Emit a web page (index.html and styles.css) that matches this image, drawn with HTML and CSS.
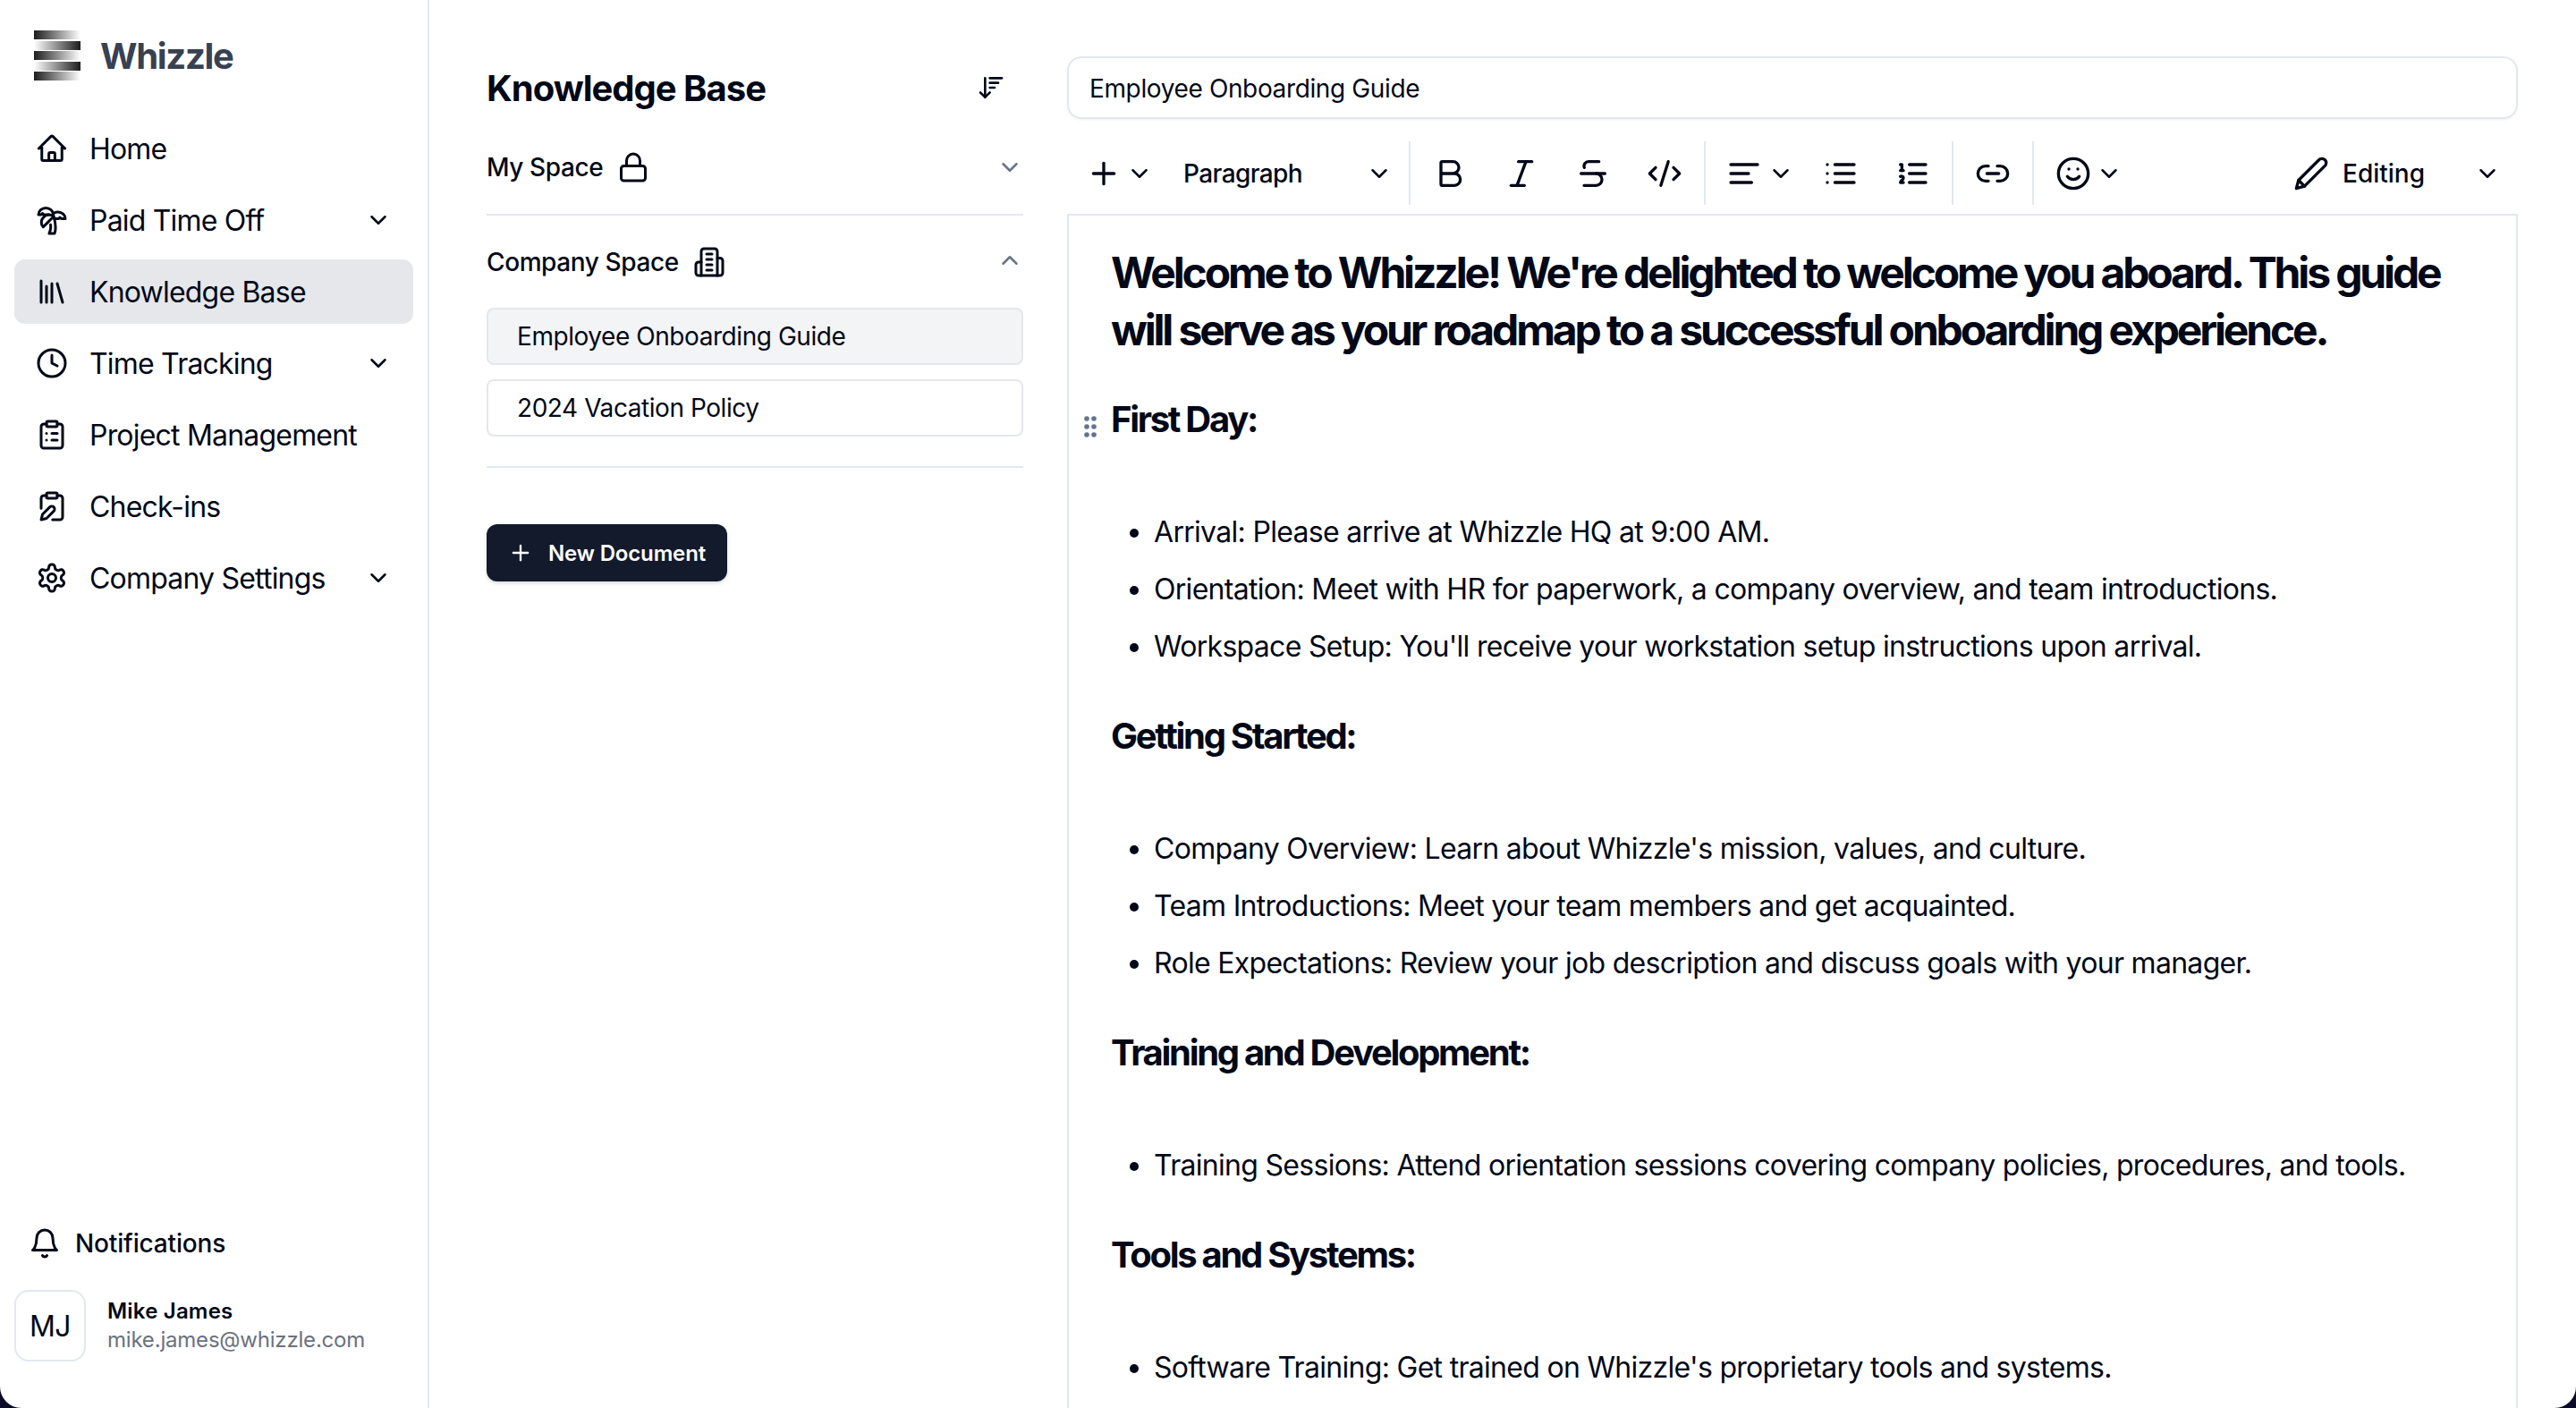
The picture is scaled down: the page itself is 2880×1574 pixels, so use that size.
FILE: index.html
```html
<!DOCTYPE html>
<html>
<head>
    <title>Whizzle - Knowledge Base</title>
    <link rel="stylesheet" href="styles.css">
</head>
<body>
<svg class="sprite">
    <symbol id="chev-down" viewBox="0 0 24 24"><path d="m6 9 6 6 6-6"/></symbol>
    <symbol id="chev-up" viewBox="0 0 24 24"><path d="m18 15-6-6-6 6"/></symbol>
</svg>

<div class="app">
    <aside class="sidebar">
        <div>
            <div class="brand">
                <div class="logo">
                    <span class="bar"></span>
                    <span class="bar flip"></span>
                    <span class="bar"></span>
                    <span class="bar flip"></span>
                    <span class="bar"></span>
                </div>
                <span class="brand-name">Whizzle</span>
            </div>
            <nav class="nav">
                <a class="nav-item">
                    <svg class="icon" viewBox="0 0 24 24" stroke-width="1.8"><path d="m2.25 12 8.954-8.955c.44-.439 1.152-.439 1.591 0L21.75 12M4.5 9.75v10.125c0 .621.504 1.125 1.125 1.125H9.75v-4.875c0-.621.504-1.125 1.125-1.125h2.25c.621 0 1.125.504 1.125 1.125V21h4.125c.621 0 1.125-.504 1.125-1.125V9.75M8.25 21h8.25"/></svg>
                    <span class="nav-label">Home</span>
                </a>
                <a class="nav-item">
                    <svg class="icon" viewBox="0 0 24 24"><path d="M13 8c0-2.76-2.46-5-5.5-5S2 5.24 2 8h2l1-1 1 1h4"/><path d="M13 7.14A5.82 5.82 0 0 1 16.5 6c3.04 0 5.5 2.24 5.5 5h-3l-1-1-1 1h-3"/><path d="M5.89 9.71c-2.15 2.15-2.3 5.47-.35 7.43l4.24-4.25.7-.7.71-.71 2.12-2.12c-1.95-1.96-5.27-1.8-7.42.35"/><path d="M11 15.5c.5 2.5-.17 4.5-1 6.5h4c2-5.5-.5-12-1-14"/></svg>
                    <span class="nav-label">Paid Time Off</span>
                    <svg class="chev"><use href="#chev-down"/></svg>
                </a>
                <a class="nav-item active">
                    <svg class="icon" viewBox="0 0 24 24"><path d="m16 6 4 14"/><path d="M12 6v14"/><path d="M8 8v12"/><path d="M4 4v16"/></svg>
                    <span class="nav-label">Knowledge Base</span>
                </a>
                <a class="nav-item">
                    <svg class="icon" viewBox="0 0 24 24"><circle cx="12" cy="12" r="10"/><path d="M12 6v6l4 2"/></svg>
                    <span class="nav-label">Time Tracking</span>
                    <svg class="chev"><use href="#chev-down"/></svg>
                </a>
                <a class="nav-item">
                    <svg class="icon" viewBox="0 0 24 24"><rect x="8" y="2" width="8" height="4" rx="1"/><path d="M16 4h2a2 2 0 0 1 2 2v14a2 2 0 0 1-2 2H6a2 2 0 0 1-2-2V6a2 2 0 0 1 2-2h2"/><path d="M12 11h4"/><path d="M12 16h4"/><path d="M8 11h.01"/><path d="M8 16h.01"/></svg>
                    <span class="nav-label">Project Management</span>
                </a>
                <a class="nav-item">
                    <svg class="icon" viewBox="0 0 24 24"><rect x="8" y="2" width="8" height="4" rx="1"/><path d="M10.4 12.6a2 2 0 0 1 3 3L8 21l-4 1 1-4Z"/><path d="M16 4h2a2 2 0 0 1 2 2v14a2 2 0 0 1-2 2h-5.5"/><path d="M4 13.5V6a2 2 0 0 1 2-2h2"/></svg>
                    <span class="nav-label">Check-ins</span>
                </a>
                <a class="nav-item">
                    <svg class="icon" viewBox="0 0 24 24"><path d="M12.22 2h-.44a2 2 0 0 0-2 2v.18a2 2 0 0 1-1 1.73l-.43.25a2 2 0 0 1-2 0l-.15-.08a2 2 0 0 0-2.73.73l-.22.38a2 2 0 0 0 .73 2.73l.15.1a2 2 0 0 1 1 1.72v.51a2 2 0 0 1-1 1.74l-.15.09a2 2 0 0 0-.73 2.73l.22.38a2 2 0 0 0 2.73.73l.15-.08a2 2 0 0 1 2 0l.43.25a2 2 0 0 1 1 1.73V20a2 2 0 0 0 2 2h.44a2 2 0 0 0 2-2v-.18a2 2 0 0 1 1-1.73l.43-.25a2 2 0 0 1 2 0l.15.08a2 2 0 0 0 2.73-.73l.22-.39a2 2 0 0 0-.73-2.73l-.15-.08a2 2 0 0 1-1-1.74v-.5a2 2 0 0 1 1-1.74l.15-.09a2 2 0 0 0 .73-2.73l-.22-.38a2 2 0 0 0-2.73-.73l-.15.08a2 2 0 0 1-2 0l-.43-.25a2 2 0 0 1-1-1.73V4a2 2 0 0 0-2-2z"/><circle cx="12" cy="12" r="3"/></svg>
                    <span class="nav-label">Company Settings</span>
                    <svg class="chev"><use href="#chev-down"/></svg>
                </a>
            </nav>
        </div>
        <div class="side-bottom">
            <div class="notif">
                <svg class="icon" viewBox="0 0 24 24"><path d="M6 8a6 6 0 0 1 12 0c0 7 3 9 3 9H3s3-2 3-9"/><path d="M10.3 21a1.94 1.94 0 0 0 3.4 0"/></svg>
                <span>Notifications</span>
            </div>
            <div class="user">
                <div class="avatar">MJ</div>
                <div>
                    <div class="user-name">Mike James</div>
                    <div class="user-mail">mike.james@whizzle.com</div>
                </div>
            </div>
        </div>
    </aside>

    <main class="main">
        <section class="docs">
            <div class="docs-head">
                <h1 class="docs-title">Knowledge Base</h1>
                <svg class="sort" viewBox="0 0 24 24"><path d="m3 16 4 4 4-4"/><path d="M7 20V4"/><path d="M11 4h10"/><path d="M11 8h7"/><path d="M11 12h4"/></svg>
            </div>

            <div class="space">
                <div class="space-head">
                    <span>My Space</span>
                    <svg class="icon" viewBox="0 0 24 24"><rect x="3" y="11" width="18" height="11" rx="2"/><path d="M7 11V7a5 5 0 0 1 10 0v4"/></svg>
                    <svg class="chev muted"><use href="#chev-down"/></svg>
                </div>
            </div>

            <div class="space open">
                <div class="space-head">
                    <span>Company Space</span>
                    <svg class="icon" viewBox="0 0 24 24"><path d="M6 22V4a2 2 0 0 1 2-2h8a2 2 0 0 1 2 2v18Z"/><path d="M6 12H4a2 2 0 0 0-2 2v6a2 2 0 0 0 2 2h2"/><path d="M18 9h2a2 2 0 0 1 2 2v9a2 2 0 0 1-2 2h-2"/><path d="M10 6h4"/><path d="M10 10h4"/><path d="M10 14h4"/><path d="M10 18h4"/></svg>
                    <svg class="chev muted up"><use href="#chev-up"/></svg>
                </div>
                <div class="doc-list">
                    <div class="doc current">Employee Onboarding Guide</div>
                    <div class="doc">2024 Vacation Policy</div>
                </div>
            </div>

            <button class="new-doc">
                <svg viewBox="0 0 24 24"><path d="M5 12h14"/><path d="M12 5v14"/></svg>
                New Document
            </button>
        </section>

        <section class="doc-edit">
            <div class="doc-name">Employee Onboarding Guide</div>

            <div class="toolbar">
                <div class="tool-group">
                    <div class="tool add">
                        <svg class="tool-icon" viewBox="0 0 24 24"><path d="M5 12h14"/><path d="M12 5v14"/></svg>
                        <svg class="chev"><use href="#chev-down"/></svg>
                    </div>
                    <div class="tool block-select">
                        <span>Paragraph</span>
                        <svg class="chev"><use href="#chev-down"/></svg>
                    </div>
                </div>
                <div class="tool-group">
                    <div class="tool"><svg class="tool-icon" viewBox="0 0 24 24"><path d="M6 12h9a4 4 0 0 1 0 8H7a1 1 0 0 1-1-1V5a1 1 0 0 1 1-1h7a4 4 0 0 1 0 8"/></svg></div>
                    <div class="tool"><svg class="tool-icon" viewBox="0 0 24 24"><path d="M19 4h-9"/><path d="M14 20H5"/><path d="M15 4 9 20"/></svg></div>
                    <div class="tool"><svg class="tool-icon" viewBox="0 0 24 24"><path d="M16 4H9a3 3 0 0 0-2.83 4"/><path d="M14 12a4 4 0 0 1 0 8H6"/><path d="M4 12h16"/></svg></div>
                    <div class="tool"><svg class="tool-icon" viewBox="0 0 24 24"><path d="m18 16 4-4-4-4"/><path d="m6 8-4 4 4 4"/><path d="m14.5 4-5 16"/></svg></div>
                </div>
                <div class="tool-group">
                    <div class="tool align">
                        <svg class="tool-icon" viewBox="0 0 24 24"><path d="M21 6H3"/><path d="M15 12H3"/><path d="M17 18H3"/></svg>
                        <svg class="chev"><use href="#chev-down"/></svg>
                    </div>
                    <div class="tool"><svg class="tool-icon" viewBox="0 0 24 24"><path d="M8 6h13"/><path d="M8 12h13"/><path d="M8 18h13"/><path d="M3 6h.01"/><path d="M3 12h.01"/><path d="M3 18h.01"/></svg></div>
                    <div class="tool"><svg class="tool-icon" viewBox="0 0 24 24"><path d="M10 6h11"/><path d="M10 12h11"/><path d="M10 18h11"/><path d="M4 10h2"/><path d="M4 6h1v4"/><path d="M6 18H4c0-1 2-2 2-3s-1-1.5-2-1"/></svg></div>
                </div>
                <div class="tool-group">
                    <div class="tool"><svg class="tool-icon" viewBox="0 0 24 24"><path d="M9 17H7A5 5 0 0 1 7 7h2"/><path d="M15 7h2a5 5 0 1 1 0 10h-2"/><path d="M8 12h8"/></svg></div>
                </div>
                <div class="tool-group last">
                    <div class="tool emoji">
                        <svg class="tool-icon" viewBox="0 0 24 24"><circle cx="12" cy="12" r="10"/><path d="M8 14s1.5 2 4 2 4-2 4-2"/><path d="M9 9h.01"/><path d="M15 9h.01"/></svg>
                        <svg class="chev"><use href="#chev-down"/></svg>
                    </div>
                </div>
                <div class="mode">
                    <svg class="tool-icon" viewBox="0 0 24 24"><path d="M17 3a2.85 2.83 0 1 1 4 4L7.5 20.5 2 22l1.5-5.5Z"/><path d="m3.5 16.5 4 4"/></svg>
                    <span class="mode-label">Editing</span>
                    <svg class="chev"><use href="#chev-down"/></svg>
                </div>
            </div>

            <div class="editor">
                <svg class="grip" viewBox="0 0 14 24">
                    <circle cx="3" cy="3" r="2.8"/><circle cx="11" cy="3" r="2.8"/>
                    <circle cx="3" cy="12" r="2.8"/><circle cx="11" cy="12" r="2.8"/>
                    <circle cx="3" cy="21" r="2.8"/><circle cx="11" cy="21" r="2.8"/>
                </svg>
                <p class="lead">Welcome to Whizzle! We're delighted to welcome you aboard. This guide will serve as your roadmap to a successful onboarding experience.</p>

                <h2>First Day:</h2>
                <ul>
                    <li>Arrival: Please arrive at Whizzle HQ at 9:00 AM.</li>
                    <li>Orientation: Meet with HR for paperwork, a company overview, and team introductions.</li>
                    <li>Workspace Setup: You'll receive your workstation setup instructions upon arrival.</li>
                </ul>

                <h2>Getting Started:</h2>
                <ul>
                    <li>Company Overview: Learn about Whizzle's mission, values, and culture.</li>
                    <li>Team Introductions: Meet your team members and get acquainted.</li>
                    <li>Role Expectations: Review your job description and discuss goals with your manager.</li>
                </ul>

                <h2>Training and Development:</h2>
                <ul>
                    <li>Training Sessions: Attend orientation sessions covering company policies, procedures, and tools.</li>
                </ul>

                <h2>Tools and Systems:</h2>
                <ul>
                    <li>Software Training: Get trained on Whizzle's proprietary tools and systems.</li>
                </ul>
            </div>
        </section>
    </main>
</div>
</body>
</html>
```

FILE: styles.css
```css
* {
    box-sizing: border-box;
}

html, body {
    margin: 0;
    height: 100%;
    overflow: hidden;
}

body {
    background-color: #0c0a26;
    font-family: Inter, "Noto Sans", sans-serif;
    color: #020817;
}

svg {
    display: block;
    flex: none;
    fill: none;
    stroke: currentColor;
    stroke-width: 2;
    stroke-linecap: round;
    stroke-linejoin: round;
}

.sprite {
    display: none;
}

.app {
    display: flex;
    height: 1574px;
    background-color: #fff;
    border-radius: 0 0 24px 24px;
    overflow: hidden;
}

/* sidebar */

.sidebar {
    width: 480px;
    flex: none;
    display: flex;
    flex-direction: column;
    justify-content: space-between;
    border-right: 2px solid #e2e8f0;
}

.brand {
    display: flex;
    align-items: center;
    gap: 22px;
    height: 56px;
    margin: 34px 0 40px 38px;
}

.logo {
    width: 52px;
    height: 56px;
    display: flex;
    flex-direction: column;
    justify-content: space-between;
}

.bar {
    height: 10px;
    background: linear-gradient(to right, #1c1c1c, #fff);
}

.bar.flip {
    background: linear-gradient(to left, #1c1c1c, #fff);
}

.brand-name {
    font-size: 40px;
    font-weight: 700;
    letter-spacing: -1.3px;
    color: #374151;
}

.nav {
    display: flex;
    flex-direction: column;
    gap: 8px;
    padding: 0 16px;
}

.nav-item {
    display: flex;
    align-items: center;
    gap: 24px;
    height: 72px;
    padding: 0 24px;
    border-radius: 12px;
    font-size: 32px;
    letter-spacing: -0.8px;
}

.nav-item.active {
    background-color: #e5e7eb;
}

.nav-label {
    flex: 1;
}

.icon {
    width: 36px;
    height: 36px;
}

.chev {
    width: 30px;
    height: 30px;
}

.chev.muted {
    color: #64748b;
}

.chev.up {
    margin-top: -5px;
}

.side-bottom {
    padding: 0 16px 52px;
}

.notif {
    display: flex;
    align-items: center;
    gap: 16px;
    padding-left: 16px;
    margin-bottom: 34px;
    font-size: 28px;
    font-weight: 500;
    letter-spacing: -0.15px;
}

.user {
    display: flex;
    align-items: center;
    gap: 24px;
}

.avatar {
    width: 80px;
    height: 80px;
    display: flex;
    align-items: center;
    justify-content: center;
    border: 2px solid #e2e8f0;
    border-radius: 16px;
    font-size: 32px;
    letter-spacing: -0.5px;
}

.user-name {
    font-size: 24px;
    font-weight: 600;
    line-height: 32px;
    letter-spacing: 0.2px;
}

.user-mail {
    font-size: 24px;
    line-height: 32px;
    letter-spacing: -0.2px;
    color: #6b7280;
}

/* document list */

.main {
    flex: 1;
    display: flex;
    gap: 49px;
    padding: 0 65px 0 64px;
    min-width: 0;
}

.docs {
    width: 600px;
    flex: none;
}

.docs-head {
    display: flex;
    align-items: center;
    justify-content: space-between;
    height: 48px;
    margin: 74px 0 34px;
    padding-right: 20px;
}

.docs-title {
    margin: 0;
    font-size: 40px;
    font-weight: 700;
    letter-spacing: -1px;
}

.sort {
    width: 32px;
    height: 32px;
}

.space {
    padding-bottom: 21px;
    border-bottom: 2px solid #e2e8f0;
}

.space.open {
    margin-top: 21px;
    padding-bottom: 33px;
}

.space-head {
    display: flex;
    align-items: center;
    gap: 16px;
    height: 62px;
    font-size: 28px;
    font-weight: 500;
    letter-spacing: -0.4px;
}

.space-head .chev {
    margin-left: auto;
}

.doc-list {
    display: flex;
    flex-direction: column;
    gap: 16px;
    margin-top: 20px;
}

.doc {
    height: 64px;
    display: flex;
    align-items: center;
    padding-left: 32px;
    border: 2px solid #e5e7eb;
    border-radius: 8px;
    font-size: 28px;
    letter-spacing: -0.44px;
}

.doc.current {
    background-color: #f3f4f6;
}

.new-doc {
    display: flex;
    align-items: center;
    gap: 17px;
    height: 64px;
    margin-top: 63px;
    padding: 0 24px;
    border: none;
    border-radius: 12px;
    background-color: #131a2c;
    color: #fff;
    font-family: inherit;
    font-size: 24px;
    font-weight: 600;
    letter-spacing: -0.15px;
    box-shadow: 0 2px 4px rgba(0, 0, 0, 0.15);
}

.new-doc svg {
    width: 28px;
    height: 28px;
}

/* editor */

.doc-edit {
    flex: 1;
    min-width: 0;
}

.doc-name {
    height: 70px;
    display: flex;
    align-items: center;
    margin-top: 63px;
    padding: 2px 0 0 23px;
    border: 2px solid #e2e8f0;
    border-radius: 16px;
    font-size: 28px;
    letter-spacing: -0.37px;
    box-shadow: 0 1px 3px rgba(0, 0, 0, 0.06);
}

.toolbar {
    display: flex;
    align-items: stretch;
    height: 71px;
    margin-top: 25px;
}

.tool-group {
    display: flex;
    align-items: center;
    gap: 8px;
    padding: 0 8px;
    border-right: 2px solid #e2e8f0;
}

.tool-group.last {
    border-right: none;
}

.tool {
    width: 72px;
    height: 60px;
    display: flex;
    align-items: center;
    justify-content: center;
}

.tool-icon {
    width: 40px;
    height: 40px;
}

.tool.add {
    width: 99px;
    padding-left: 13px;
    gap: 5px;
    justify-content: flex-start;
}

.tool.block-select {
    width: 259px;
    padding: 0 10px 0 15px;
    justify-content: space-between;
    font-size: 28px;
    font-weight: 500;
    letter-spacing: -0.6px;
}

.tool.align {
    width: 99px;
    padding-left: 15px;
    gap: 6px;
    justify-content: flex-start;
}

.tool.emoji {
    width: 100px;
    padding-left: 16px;
    gap: 5px;
    justify-content: flex-start;
}

.mode {
    display: flex;
    align-items: center;
    gap: 15px;
    margin-left: auto;
    padding-right: 19px;
    font-size: 28px;
    font-weight: 500;
}

.mode-label {
    width: 132px;
}

.editor {
    position: relative;
    margin-top: 10px;
    height: 1400px;
    padding: 32px 47px;
    border: 2px solid #e2e8f0;
    border-bottom: none;
}

.grip {
    position: absolute;
    left: 17px;
    top: 224px;
    width: 14px;
    height: 24px;
    fill: #64748b;
    stroke: none;
}

.lead {
    margin: 0;
    font-size: 48px;
    font-weight: 650;
    line-height: 64px;
    letter-spacing: -3.15px;
}

.editor h2 {
    margin: 40px 0 66px;
    font-size: 40px;
    font-weight: 650;
    line-height: 56px;
    letter-spacing: -2.3px;
}

.editor ul {
    margin: 0;
    padding-left: 48px;
}

.editor li {
    font-size: 32px;
    line-height: 64px;
    letter-spacing: -0.7px;
}
```
